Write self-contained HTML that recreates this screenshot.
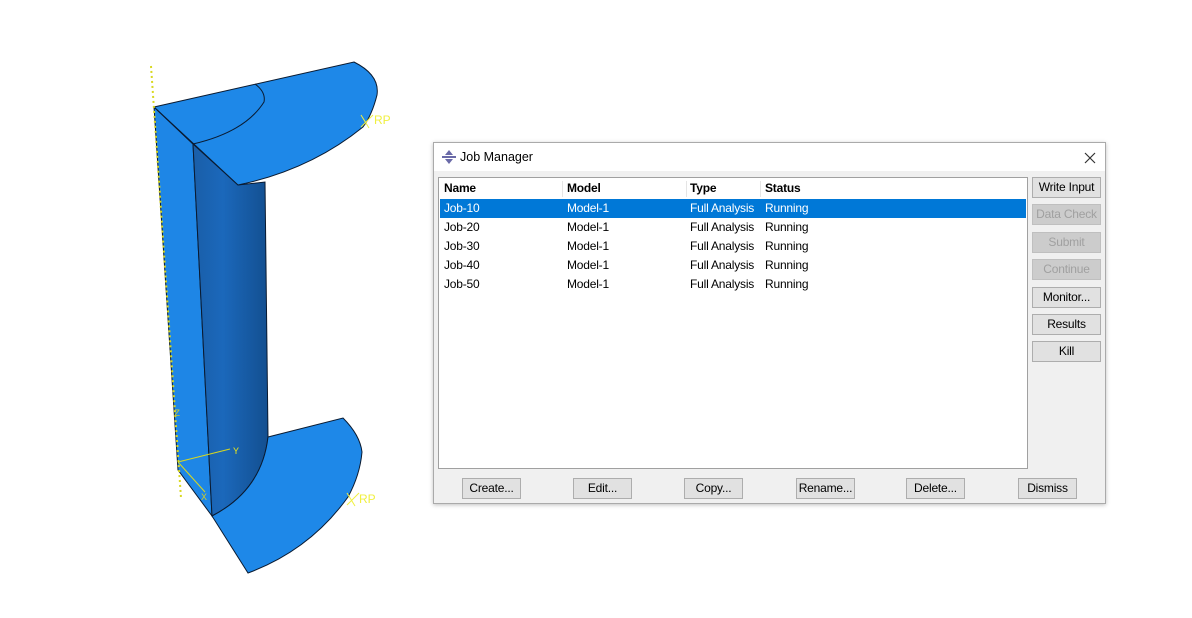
<!DOCTYPE html>
<html><head><meta charset="utf-8"><style>
*{margin:0;padding:0;box-sizing:border-box}
body{width:1192px;height:618px;background:#fff;position:relative;overflow:hidden;font-family:"Liberation Sans","Noto Sans CJK SC",sans-serif;font-size:12px;color:#000}
.dlg{position:absolute;left:433px;top:142px;width:673px;height:362px;background:#f0f0f0;border:1px solid #aaa;box-shadow:0 1px 4px rgba(0,0,0,.25)}
.title{position:absolute;left:0;top:0;width:671px;height:28px;background:#fff}
.title span{position:absolute;left:26px;top:7px;font-size:12.5px}
.list{position:absolute;left:4px;top:34px;width:590px;height:292px;background:#fff;border:1px solid #a0a0a0;letter-spacing:-0.2px}
.row{position:absolute;left:1px;width:586px;height:19px;line-height:19px}
.row span{position:absolute}
.hdr{font-weight:bold;top:1px;height:20px}
.sel{background:#0078d7;color:#fff}
.btn{position:absolute;border:1px solid #adadad;background:#e1e1e1;text-align:center;line-height:18px;height:21px;font-size:12px;letter-spacing:-0.2px}
.dis{color:#a0a0a0;background:#ccc;border-color:#bfbfbf}
</style></head><body>
<svg width="420" height="618" style="position:absolute;left:0;top:0">
<defs><linearGradient id="g" x1="0" x2="1"><stop offset="0" stop-color="#1a5ea8"/><stop offset="0.4" stop-color="#1b68bb"/><stop offset="1" stop-color="#134f90"/></linearGradient></defs>
<polygon points="154,107 193,144 212,516 178,470" fill="#1e86e6" stroke="#0a1a30" stroke-width="1"/>
<path d="M193,144 L238,185 L265,182 L268,437 Q262,490 212,516 Z" fill="url(#g)" stroke="#0a1a30" stroke-width="1"/>
<path d="M154,107 L354,62 Q380,75 377,95 Q372,115 363,127 Q310,170 238,185 Z" fill="#1e88e8" stroke="#0a1a30" stroke-width="1"/>
<path d="M255,84 Q266,92 264,102 Q245,132 193,144" fill="none" stroke="#0a1a30" stroke-width="1"/>
<line x1="154" y1="107" x2="193" y2="144" stroke="#0a1a30"/>
<path d="M268,437 L343,418 Q360,435 362,452 Q360,475 348,497 Q310,550 248,573 L212,516 Q262,490 268,437 Z" fill="#1e88e8" stroke="#0a1a30" stroke-width="1"/>
<line x1="151" y1="66" x2="181" y2="498" stroke="#d8d820" stroke-width="2" stroke-dasharray="2,3"/>
<line x1="178" y1="462" x2="230" y2="449" stroke="#d8d820" stroke-width="1"/>
<line x1="178" y1="462" x2="205" y2="492" stroke="#d8d820" stroke-width="1"/>
<text x="233" y="454" fill="#e0e020" font-size="10" font-family="Liberation Mono">Y</text>
<text x="174" y="416" fill="#c8c830" font-size="10" font-family="Liberation Mono">Z</text>
<text x="201" y="500" fill="#c8c830" font-size="10" font-family="Liberation Mono">X</text>
<line x1="361" y1="115" x2="369" y2="128" stroke="#f0f040"/><line x1="361" y1="127" x2="373" y2="115" stroke="#f0f040"/>
<text x="374" y="124" fill="#f0f040" font-size="12">RP</text>
<line x1="347" y1="493" x2="355" y2="506" stroke="#f0f040"/><line x1="347" y1="505" x2="359" y2="493" stroke="#f0f040"/>
<text x="359" y="503" fill="#f0f040" font-size="12">RP</text>
</svg>
<div class="dlg">
<div class="title">
<svg width="14" height="14" style="position:absolute;left:8px;top:7px"><polygon points="7,0 11,5 3,5" fill="#6a6aa8"/><polygon points="7,14 11,9 3,9" fill="#6a6aa8"/><rect x="0" y="6" width="14" height="2" fill="#6a6aa8"/></svg>
<span>Job Manager</span>
<svg width="12" height="12" style="position:absolute;left:650px;top:9px"><path d="M1,1 L11,11 M11,1 L1,11" stroke="#333" stroke-width="1.2"/></svg>
</div>
<div class="list">
<div class="row hdr"><span style="left:4px">Name</span><span style="left:127px">Model</span><span style="left:250px">Type</span><span style="left:325px">Status</span>
<div style="position:absolute;left:122px;top:2px;width:1px;height:16px;background:#e5e5e5"></div><div style="position:absolute;left:246px;top:2px;width:1px;height:16px;background:#e5e5e5"></div><div style="position:absolute;left:320px;top:2px;width:1px;height:16px;background:#e5e5e5"></div></div>
<div class="row sel" style="top:21px"><span style="left:4px">Job-10</span><span style="left:127px">Model-1</span><span style="left:250px">Full Analysis</span><span style="left:325px">Running</span></div>
<div class="row" style="top:40px"><span style="left:4px">Job-20</span><span style="left:127px">Model-1</span><span style="left:250px">Full Analysis</span><span style="left:325px">Running</span></div>
<div class="row" style="top:59px"><span style="left:4px">Job-30</span><span style="left:127px">Model-1</span><span style="left:250px">Full Analysis</span><span style="left:325px">Running</span></div>
<div class="row" style="top:78px"><span style="left:4px">Job-40</span><span style="left:127px">Model-1</span><span style="left:250px">Full Analysis</span><span style="left:325px">Running</span></div>
<div class="row" style="top:97px"><span style="left:4px">Job-50</span><span style="left:127px">Model-1</span><span style="left:250px">Full Analysis</span><span style="left:325px">Running</span></div>
</div>
<div class="btn" style="left:598px;top:34px;width:69px">Write Input</div>
<div class="btn dis" style="left:598px;top:61px;width:69px">Data Check</div>
<div class="btn dis" style="left:598px;top:89px;width:69px">Submit</div>
<div class="btn dis" style="left:598px;top:116px;width:69px">Continue</div>
<div class="btn" style="left:598px;top:144px;width:69px">Monitor...</div>
<div class="btn" style="left:598px;top:171px;width:69px">Results</div>
<div class="btn" style="left:598px;top:198px;width:69px">Kill</div>
<div class="btn" style="left:28px;top:335px;width:59px">Create...</div>
<div class="btn" style="left:139px;top:335px;width:59px">Edit...</div>
<div class="btn" style="left:250px;top:335px;width:59px">Copy...</div>
<div class="btn" style="left:362px;top:335px;width:59px">Rename...</div>
<div class="btn" style="left:472px;top:335px;width:59px">Delete...</div>
<div class="btn" style="left:584px;top:335px;width:59px">Dismiss</div>
</div>
</body></html>
